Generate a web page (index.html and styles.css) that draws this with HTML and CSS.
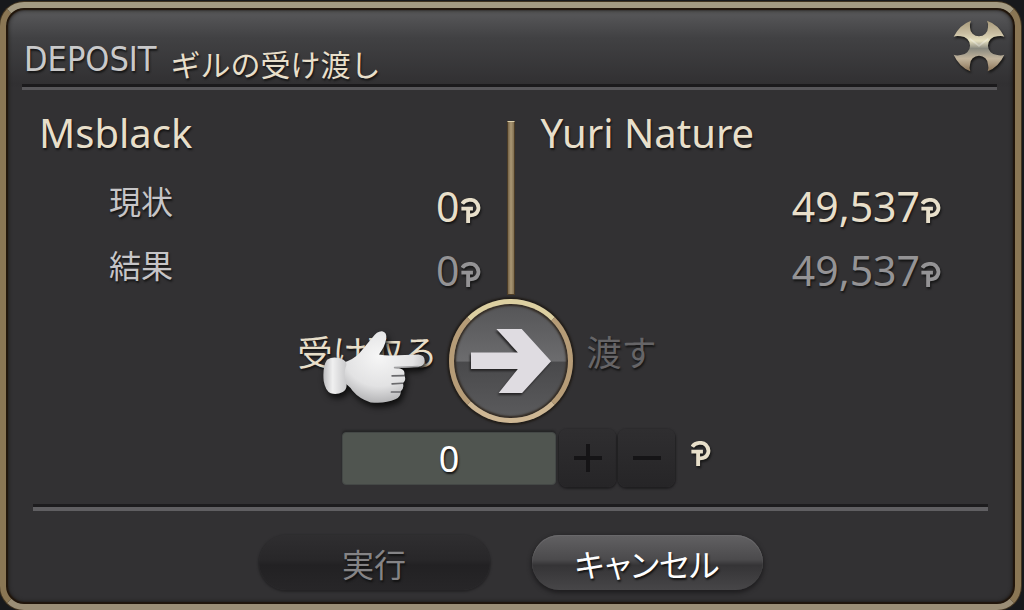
FILE: index.html
```html
<!DOCTYPE html>
<html lang="ja">
<head>
<meta charset="utf-8">
<title>ギルの受け渡し</title>
<link rel="stylesheet" href="styles.css">
</head>
<body>
<svg class="defs" aria-hidden="true">
  <symbol id="gil" viewBox="0 0 20 26">
    <path d="M1 6C4 1 12 1 15 4C20 9 18 18 9 18M0 11H12M7 11V26" fill="none" stroke="currentColor" stroke-width="4"/>
  </symbol>
</svg>
<main class="window">
  <header class="header">
    <h1 class="title">DEPOSIT</h1>
    <p class="subtitle">ギルの受け渡し</p>
    <button class="close" aria-label="閉じる">
      <svg viewBox="0 0 156 156">
        <defs>
          <linearGradient id="metal" x1="0" y1="0" x2="0" y2="1">
            <stop offset="0" stop-color="#a89a7b"/><stop offset=".25" stop-color="#c9bea2"/><stop offset=".4" stop-color="#e6e0bf"/><stop offset=".55" stop-color="#89897f"/><stop offset=".75" stop-color="#c2b49c"/><stop offset="1" stop-color="#8b7458"/>
          </linearGradient>
        </defs>
        <path d="M54 2Q49 12 51 22A27 27 0 0 0 105 22Q107 12 102 2Q136 13 154 50Q145 46 133 49A28 28 0 0 0 133 105Q145 108 154 104Q138 140 104 154Q108 143 105 134A27 27 0 0 0 51 134Q48 143 52 154Q18 140 2 104Q11 108 23 105A28 28 0 0 0 23 49Q11 46 2 50Q20 14 54 2Z" fill="url(#metal)"/>
        <path d="M50 56L78 78L106 56" fill="none" stroke="#fff" stroke-opacity=".3" stroke-width="5"/>
      </svg>
    </button>
  </header>

  <div class="parties">
    <section class="party party-left">
      <h2 class="name">Msblack</h2>
      <dl class="amounts">
        <div class="amount"><dt>現状</dt><dd>0<svg class="gil"><use href="#gil"/></svg></dd></div>
        <div class="amount"><dt>結果</dt><dd class="dim">0<svg class="gil"><use href="#gil"/></svg></dd></div>
      </dl>
    </section>
    <div class="divider"></div>
    <section class="party party-right">
      <h2 class="name">Yuri Nature</h2>
      <div class="amounts">
        <p class="amount">49,537<svg class="gil"><use href="#gil"/></svg></p>
        <p class="amount dim">49,537<svg class="gil"><use href="#gil"/></svg></p>
      </div>
    </section>
  </div>

  <div class="direction">
    <span class="side take">受け取る
      <svg class="hand" viewBox="0 0 310 225" aria-hidden="true">
        <defs>
          <radialGradient id="glove" cx=".45" cy=".35" r=".7">
            <stop offset="0" stop-color="#f6f6f6"/><stop offset=".6" stop-color="#e2e2e3"/><stop offset="1" stop-color="#aaaaac"/>
          </radialGradient>
          <linearGradient id="cuff" x1="0" y1="0" x2="1" y2="0">
            <stop offset="0" stop-color="#bdbdbf"/><stop offset=".4" stop-color="#f0f0f0"/><stop offset="1" stop-color="#c8c8ca"/>
          </linearGradient>
        </defs>
        <path d="M60 98Q94 88 112 68L151 21Q164 2 179 3Q195 6 191 27Q188 48 170 72Q190 76 208 75L287 72Q306 74 306 90Q306 108 286 109L212 113Q228 111 235 115Q249 119 245 135Q253 149 241 158Q246 171 235 182Q235 199 219 206Q187 220 145 215Q111 204 91 180Q76 160 62 156Z" fill="url(#glove)"/>
        <path d="M15 88Q36 74 64 88Q78 96 70 112Q64 134 72 156Q77 174 62 184Q44 194 26 188Q10 180 5 151Q1 108 15 88Z" fill="url(#cuff)"/>
        <path d="M209 136L243 135M209 160L240 158M207 184L233 184" fill="none" stroke="#6a6a6d" stroke-width="5" stroke-linecap="round"/>
        <path d="M216 111L287 108" fill="none" stroke="#a0a0a2" stroke-width="4" stroke-linecap="round"/>
      </svg>
    </span>
    <button class="swap" aria-label="切り替え">
      <svg viewBox="0 0 84 66"><path d="M1 24H49L27 0H53L83 33L53 66H29L49 41H1Z" fill="#dfdce1"/></svg>
    </button>
    <span class="side give">渡す</span>
  </div>

  <div class="entry">
    <input class="value" type="text" value="0" aria-label="ギル">
    <button class="step" aria-label="増やす" disabled><svg viewBox="0 0 28 28"><path d="M0 14H28M14 0V28"/></svg></button>
    <button class="step" aria-label="減らす" disabled><svg viewBox="0 0 28 28"><path d="M0 14H28"/></svg></button>
    <svg class="gil unit"><use href="#gil"/></svg>
  </div>

  <footer class="footer">
    <button class="action" disabled>実行</button>
    <button class="action">キャンセル</button>
  </footer>
</main>
</body>
</html>
```
FILE: styles.css
```css
* {
  box-sizing: border-box;
}

body {
  margin: 0;
  min-height: 100vh;
  padding: 2px 3px 0 0;
  display: flex;
  background: #17191c;
  color: #e8dfca;
  font-family: "Noto Sans", "Noto Sans CJK JP", sans-serif;
}

h1, h2, p, dl, dd {
  margin: 0;
  font-weight: 400;
}

button {
  border: 0;
  padding: 0;
  background: none;
  font: inherit;
}

.defs {
  position: absolute;
  width: 0;
  height: 0;
}

.window {
  flex: 1;
  display: flex;
  flex-direction: column;
  border: 6px solid;
  border-color: #a39a82 #8a7654 #9b8e76 #8a7654;
  border-radius: 24px;
  background:
    linear-gradient(#5b5b5d, #414143 30px, #313032 76px, transparent 80px),
    #323133;
  box-shadow:
    inset 0 0 1px 2px #21150a,
    inset 0 0 4px 2px #1b1917,
    0 0 0 1px #40331f;
  text-shadow: 1px 2px 2px #151515;
}

.header {
  display: flex;
  align-items: flex-end;
  gap: 14px;
  height: 79px;
  margin: 0 18px 0 16px;
  padding: 0 0 2px 2px;
  border-bottom: 3px solid #1b1a1c;
  box-shadow: 0 3px 0 #58575a;
}

.title {
  color: #c9c9ca;
  font: 400 34px/46px "Liberation Sans Narrow", "DejaVu Sans Condensed", sans-serif;
}

.subtitle {
  font: 400 30px/38px "Noto Sans CJK JP", sans-serif;
}

.close {
  align-self: flex-start;
  width: 52px;
  height: 52px;
  margin: 12px -8px 0 auto;
  filter: drop-shadow(1px 2px 1px #171615);
}

.close svg,
.swap svg {
  display: block;
  width: 100%;
}

.parties {
  display: grid;
  grid-template-columns: 1fr 8px 1fr;
  margin-top: 20px;
}

.divider {
  height: 174px;
  margin-top: 14px;
  border: 1px solid #4c3c26;
  border-top-color: #ded2ae;
  background: linear-gradient(90deg, #78664a, #aa9774, #806e50);
}

.party-left {
  padding: 0 26px 0 33px;
}

.party-right {
  padding: 0 74px 0 26px;
}

.name {
  font-size: 40px;
  line-height: 52px;
}

.amounts {
  padding-top: 15px;
}

.amount {
  display: flex;
  align-items: center;
  justify-content: flex-end;
  height: 64px;
  font-size: 41px;
}

dt {
  margin-right: auto;
  padding: 0 0 12px 70px;
  color: #c6c5c7;
  font-family: "Noto Sans CJK JP", sans-serif;
  font-size: 32px;
  line-height: 48px;
}

dd {
  display: flex;
  align-items: center;
}

.gil {
  width: 20px;
  height: 25px;
  margin: 8px 0 0 1px;
  filter: drop-shadow(1px 2px 1px #151515);
}

.dim {
  color: #949395;
}

.direction {
  display: grid;
  grid-template-columns: 1fr 124px 1fr;
  gap: 14px;
  margin-top: -3px;
}

.side {
  position: relative;
  padding-top: 26px;
  font: 400 35px/52px "Noto Sans CJK JP", sans-serif;
}

.take {
  margin-right: -3px;
  text-align: right;
}

.give {
  color: #666567;
}

.hand {
  position: absolute;
  right: 12px;
  top: 31px;
  width: 104px;
  height: 76px;
  filter: drop-shadow(2px 4px 3px #0c0c0c);
}

.swap {
  height: 124px;
  padding: 0 16px;
  border: 5px solid;
  border-color: #ddd0a1 #b69c77 #ceb794 #b69c77;
  border-radius: 50%;
  background: linear-gradient(#555557, #6c6c6e 50%, #49494b 51%, #5b5b5d);
  box-shadow: inset 0 0 2px 2px #332b23, 0 0 2px 2px #211d19;
}

.swap svg {
  filter: drop-shadow(-1px 2px 1px #242324);
}

.entry {
  display: flex;
  justify-content: center;
  align-items: center;
  gap: 2px;
  margin-top: 6px;
  padding-left: 32px;
}

.value {
  width: 214px;
  height: 53px;
  margin-right: 1px;
  border: 1px solid #444846;
  border-radius: 4px;
  background: #505550;
  box-shadow: 0 -2px 2px #252526;
  color: #fff;
  font: 400 36px/48px "Noto Sans", sans-serif;
  text-align: center;
  text-shadow: 1px 2px 2px #151515;
}

.step {
  width: 57px;
  height: 58px;
  border-radius: 8px;
  background: linear-gradient(#2f2e30, #262527);
  box-shadow: 0 1px 2px 1px #1f1e20;
}

.step svg {
  display: block;
  width: 28px;
  margin: auto;
  stroke: #151416;
  stroke-width: 4;
}

.unit {
  align-self: flex-start;
  margin: 12px 0 0 14px;
}

.footer {
  display: flex;
  justify-content: center;
  gap: 42px;
  margin: 17px 27px 0;
  padding-top: 28px;
  border-top: 3px solid #1d1c1e;
  box-shadow: inset 0 4px 0 #605f62;
}

.action {
  width: 231px;
  height: 55px;
  border-radius: 28px;
  background: linear-gradient(#626163, #4b4a4c 45%, #353436 55%, #474648);
  box-shadow: 0 2px 4px 1px #1e1d1f, inset 0 1px 1px #6b6a6c;
  color: #fff;
  font: 400 32px/52px "Noto Sans CJK JP", sans-serif;
  font-feature-settings: "palt";
  text-shadow: 1px 2px 2px #111;
}

.action:disabled {
  background: linear-gradient(#2f2e30, #282729 45%, #222123 55%, #272628);
  box-shadow: 0 1px 2px 1px #242325;
  color: #858486;
}
```
